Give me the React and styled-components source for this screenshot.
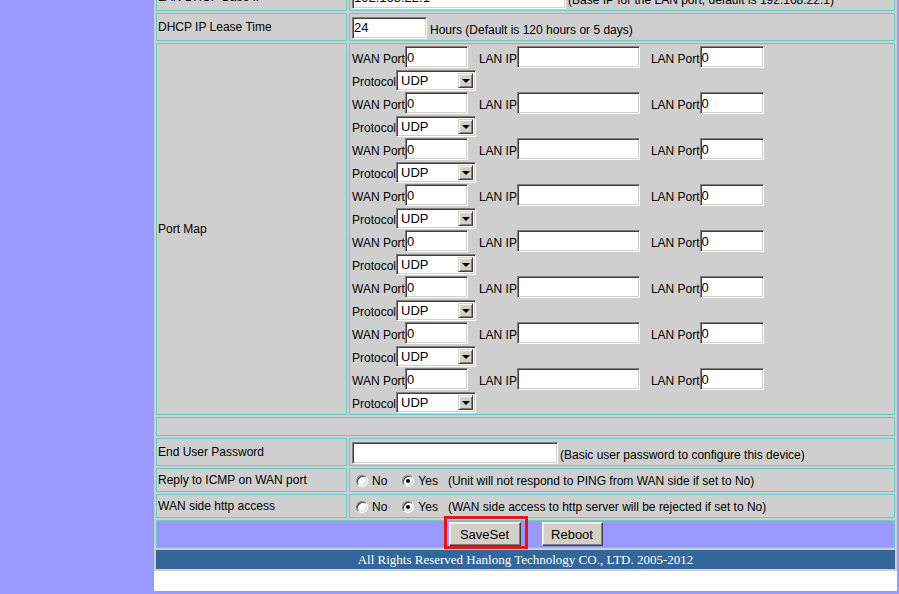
import styled, { createGlobalStyle } from 'styled-components';

const GlobalStyle = createGlobalStyle`
  html, body {
    margin: 0;
    padding: 0;
    overflow: hidden;
    background: #9999ff;
  }
`;

const Page = styled.div`
  display: flex;
  height: 594px;
  background: #9999ff;
`;

const Side = styled.div`
  width: 154px;
  flex: none;
`;

const Main = styled.main`
  width: 743px;
  height: 591px;
  flex: none;
  overflow: hidden;
  background: #fff;
  font: 12px 'Liberation Sans', Arial, sans-serif;
  color: #000;
`;

const Sheet = styled.div`
  display: grid;
  grid-template-columns: 191px 546px;
  gap: 2px;
  padding: 2px;
  margin-top: -19px;
  background: #cfcfcf;
`;

const Cell = styled.div`
  box-sizing: border-box;
  height: ${(p) => p.$h}px;
  border: 1px solid ${(p) => p.$line || '#66cccc'};
  padding: 1px 1px 1px ${(p) => (p.$value ? 2 : 1)}px;
  display: flex;
  align-items: ${(p) => p.$align || 'center'};
  justify-content: ${(p) => (p.$center ? 'center' : 'flex-start')};
  gap: ${(p) => p.$gap || 0}px;
  grid-column: ${(p) => (p.$span ? '1 / -1' : 'auto')};
  background: ${(p) => p.$bg || 'transparent'};
`;

const Label = styled.span`
  white-space: nowrap;
`;

const Line = styled.div`
  box-sizing: border-box;
  height: 23px;
  padding-top: 1px;
  display: flex;
  align-items: flex-end;
  white-space: nowrap;
`;

const Field = styled.span`
  margin-left: ${(p) => p.$gap || 0}px;
  padding-bottom: 2px;
`;

const Input = styled.input`
  box-sizing: border-box;
  width: ${(p) => p.$w}px;
  height: 22px;
  margin: 0;
  padding: 0 1px;
  background: #fff;
  border: 1px solid;
  border-color: #808080 #fff #fff #808080;
  box-shadow: inset 1px 1px 0 #404040, inset -1px -1px 0 #d4d0c8;
  font: 13px 'Liberation Sans', Arial, sans-serif;
  color: #000;
  outline: none;
`;

const Select = styled.span`
  box-sizing: border-box;
  display: inline-flex;
  align-items: center;
  width: 80px;
  height: 21px;
  padding: 2px;
  background: #fff;
  border: 1px solid;
  border-color: #808080 #fff #fff #808080;
  box-shadow: inset 1px 1px 0 #404040, inset -1px -1px 0 #d4d0c8;
  font: 13px 'Liberation Sans', Arial, sans-serif;
`;

const SelectValue = styled.span`
  flex: 1;
  padding-left: 2px;
`;

const SelectArrow = styled.span`
  box-sizing: border-box;
  width: 15px;
  height: 100%;
  display: flex;
  align-items: center;
  justify-content: center;
  background: #d4d0c8;
  border: 1px solid;
  border-color: #d4d0c8 #404040 #404040 #d4d0c8;
  box-shadow: inset 1px 1px 0 #fff, inset -1px -1px 0 #808080;

  &::after {
    content: '';
    border-left: 4px solid transparent;
    border-right: 4px solid transparent;
    border-top: 4px solid #000;
    margin-top: 1px;
  }
`;

const Choice = styled.span`
  display: inline-flex;
  align-items: center;
  margin-left: ${(p) => p.$gap}px;
  padding-top: 1px;
`;

const Radio = styled.span`
  box-sizing: border-box;
  position: relative;
  width: 12px;
  height: 12px;
  margin-right: 4px;
  border-radius: 50%;
  background: #fff;
  border: 1px solid;
  border-color: #808080 #fff #fff #808080;
  box-shadow: inset 1px 1px 0 #404040, inset -1px -1px 0 #d4d0c8;

  &::after {
    content: '';
    display: ${(p) => (p.$on ? 'block' : 'none')};
    position: absolute;
    left: 3px;
    top: 3px;
    width: 4px;
    height: 4px;
    border-radius: 50%;
    background: #000;
  }
`;

const Hint = styled.span`
  margin-left: ${(p) => p.$gap || 0}px;
  padding-bottom: ${(p) => (p.$low ? 2 : 0)}px;
  padding-top: ${(p) => (p.$low ? 0 : 1)}px;
  white-space: nowrap;
`;

const Button = styled.button`
  box-sizing: border-box;
  width: ${(p) => p.$w}px;
  height: 24px;
  margin: 0;
  padding: 0;
  background: #d4d0c8;
  border: 1px solid;
  border-color: #fff #404040 #404040 #fff;
  box-shadow: inset -1px -1px 0 #808080, inset 1px 1px 0 #e8e6e0;
  font: 13px 'Liberation Sans', Arial, sans-serif;
  color: #000;
`;

const Marked = styled.span`
  position: relative;
  display: inline-flex;

  &::after {
    content: '';
    position: absolute;
    left: -5px;
    top: -6px;
    right: -7px;
    bottom: -3px;
    border: 3px solid #e3161d;
  }
`;

const Footer = styled(Cell)`
  color: #fff;
  font: 13px 'Liberation Serif', 'Times New Roman', serif;
`;

const Tail = styled.div`
  height: 20px;
`;

function YesNo({ hint }) {
  return (
    <>
      <Choice $gap={4}>
        <Radio />
        No
      </Choice>
      <Choice $gap={15}>
        <Radio $on />
        Yes
      </Choice>
      <Hint $gap={10}>{hint}</Hint>
    </>
  );
}

function PortEntry() {
  return (
    <>
      <Line>
        <Field>WAN Port</Field>
        <Input $w={63} defaultValue="0" />
        <Field $gap={11}>LAN IP</Field>
        <Input $w={123} defaultValue="" />
        <Field $gap={11}>LAN Port</Field>
        <Input $w={64} defaultValue="0" />
      </Line>
      <Line>
        <Field>Protocol</Field>
        <Select>
          <SelectValue>UDP</SelectValue>
          <SelectArrow />
        </Select>
      </Line>
    </>
  );
}

export default function App() {
  return (
    <>
      <GlobalStyle />
      <Page>
        <Side />
        <Main>
          <Sheet>
            <Cell $h={28}>
              <Label>LAN DHCP Base IP</Label>
            </Cell>
            <Cell $h={28} $value>
              <Line>
                <Input $w={214} defaultValue="192.168.22.1" />
                <Hint $gap={2} $low>
                  (Base IP for the LAN port, default is 192.168.22.1)
                </Hint>
              </Line>
            </Cell>

            <Cell $h={28}>
              <Label>DHCP IP Lease Time</Label>
            </Cell>
            <Cell $h={28} $value>
              <Line>
                <Input $w={75} defaultValue="24" />
                <Hint $gap={3} $low>
                  Hours (Default is 120 hours or 5 days)
                </Hint>
              </Line>
            </Cell>

            <Cell $h={372}>
              <Label>Port Map</Label>
            </Cell>
            <Cell $h={372} $value $align="stretch">
              <div>
                {Array(8)
                  .fill(null)
                  .map((_, i) => (
                    <PortEntry key={i} />
                  ))}
              </div>
            </Cell>

            <Cell $h={19} $span />

            <Cell $h={28}>
              <Label>End User Password</Label>
            </Cell>
            <Cell $h={28} $value>
              <Line>
                <Input $w={206} type="password" defaultValue="" />
                <Hint $gap={2} $low>
                  (Basic user password to configure this device)
                </Hint>
              </Line>
            </Cell>

            <Cell $h={24}>
              <Label>Reply to ICMP on WAN port</Label>
            </Cell>
            <Cell $h={24} $value>
              <YesNo hint="(Unit will not respond to PING from WAN side if set to No)" />
            </Cell>

            <Cell $h={24}>
              <Label>WAN side http access</Label>
            </Cell>
            <Cell $h={24} $value>
              <YesNo hint="(WAN side access to http server will be rejected if set to No)" />
            </Cell>

            <Cell $h={28} $span $center $gap={21} $bg="#9999ff">
              <Marked>
                <Button $w={72}>SaveSet</Button>
              </Marked>
              <Button $w={61}>Reboot</Button>
            </Cell>

            <Footer $h={19} $span $center $bg="#336699" $line="#336699">
              All Rights Reserved Hanlong Technology CO., LTD. 2005-2012
            </Footer>
          </Sheet>
          <Tail />
        </Main>
      </Page>
    </>
  );
}
